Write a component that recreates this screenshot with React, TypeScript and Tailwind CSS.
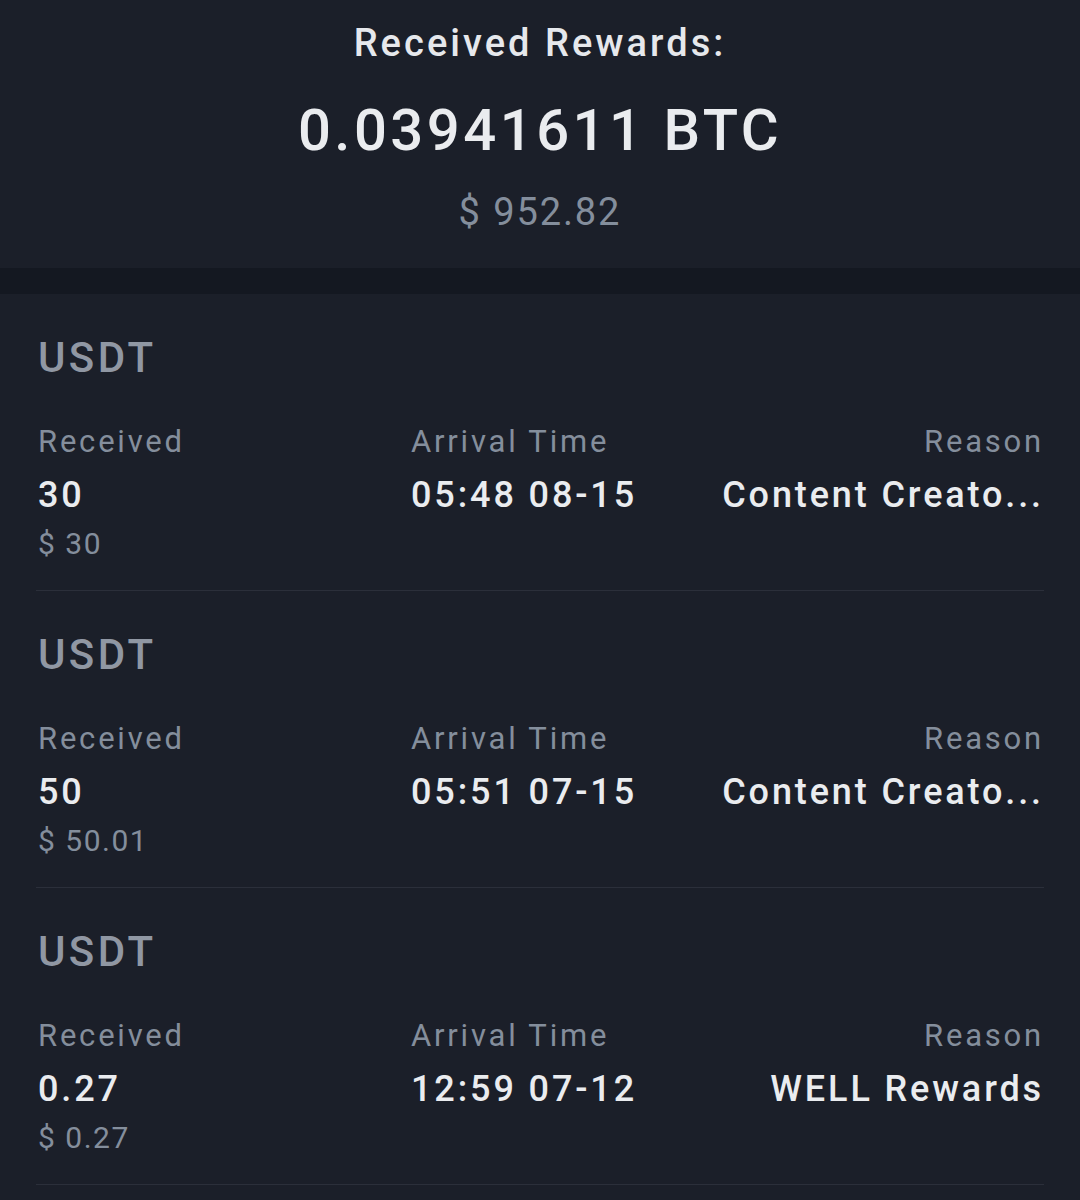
const rows = [
  { coin: "USDT", amount: "30", usd: "$ 30", time: "05:48 08-15", reason: "Content Creato..." },
  { coin: "USDT", amount: "50", usd: "$ 50.01", time: "05:51 07-15", reason: "Content Creato..." },
  { coin: "USDT", amount: "0.27", usd: "$ 0.27", time: "12:59 07-12", reason: "WELL Rewards" },
];

const font = { fontFamily: "Roboto, 'Noto Sans', sans-serif" };

export default function App() {
  return (
    <div className="w-[1080px] h-[1200px] overflow-hidden bg-[#1b1f29]" style={font}>
      <div className="h-[268px] flex flex-col items-center pt-[19px]">
        <div className="text-[38px] leading-[48px] tracking-[0.08em] font-medium text-[#e6e8ec]">
          Received Rewards:
        </div>
        <div className="mt-[27px] text-[58px] leading-[72px] tracking-[0.06em] font-medium text-[#eaecef]">
          0.03941611 BTC
        </div>
        <div className="mt-[22px] text-[38px] leading-[48px] tracking-[0.05em] text-[#848e9c]">
          $ 952.82
        </div>
      </div>
      <div className="h-[26px] bg-[#141821]" />
      <div className="px-[36px]">
        {rows.map((r, i) => (
          <div key={i} className="pt-[40px] pb-[28px] border-b border-[#2b2f3a]">
            <div className="text-[42px] leading-[48px] tracking-[0.08em] font-medium text-[#9097a3] pl-[2px]">
              {r.coin}
            </div>
            <div className="mt-[40px] grid grid-cols-[373px_1fr_auto] pl-[2px]">
              <div className="text-[31px] leading-[40px] tracking-[0.09em] text-[#848e9c]">Received</div>
              <div className="text-[31px] leading-[40px] tracking-[0.09em] text-[#848e9c]">Arrival Time</div>
              <div className="text-[31px] leading-[40px] tracking-[0.09em] text-[#848e9c] text-right">Reason</div>
              <div className="mt-[9px] text-[36px] leading-[48px] tracking-[0.08em] font-medium text-[#eaecef]">{r.amount}</div>
              <div className="mt-[9px] text-[36px] leading-[48px] tracking-[0.08em] font-medium text-[#eaecef]">{r.time}</div>
              <div className="mt-[9px] text-[36px] leading-[48px] tracking-[0.08em] font-medium text-[#eaecef] text-right">{r.reason}</div>
              <div className="mt-[7px] text-[30px] leading-[36px] tracking-[0.05em] text-[#848e9c]">{r.usd}</div>
            </div>
          </div>
        ))}
      </div>
    </div>
  );
}
